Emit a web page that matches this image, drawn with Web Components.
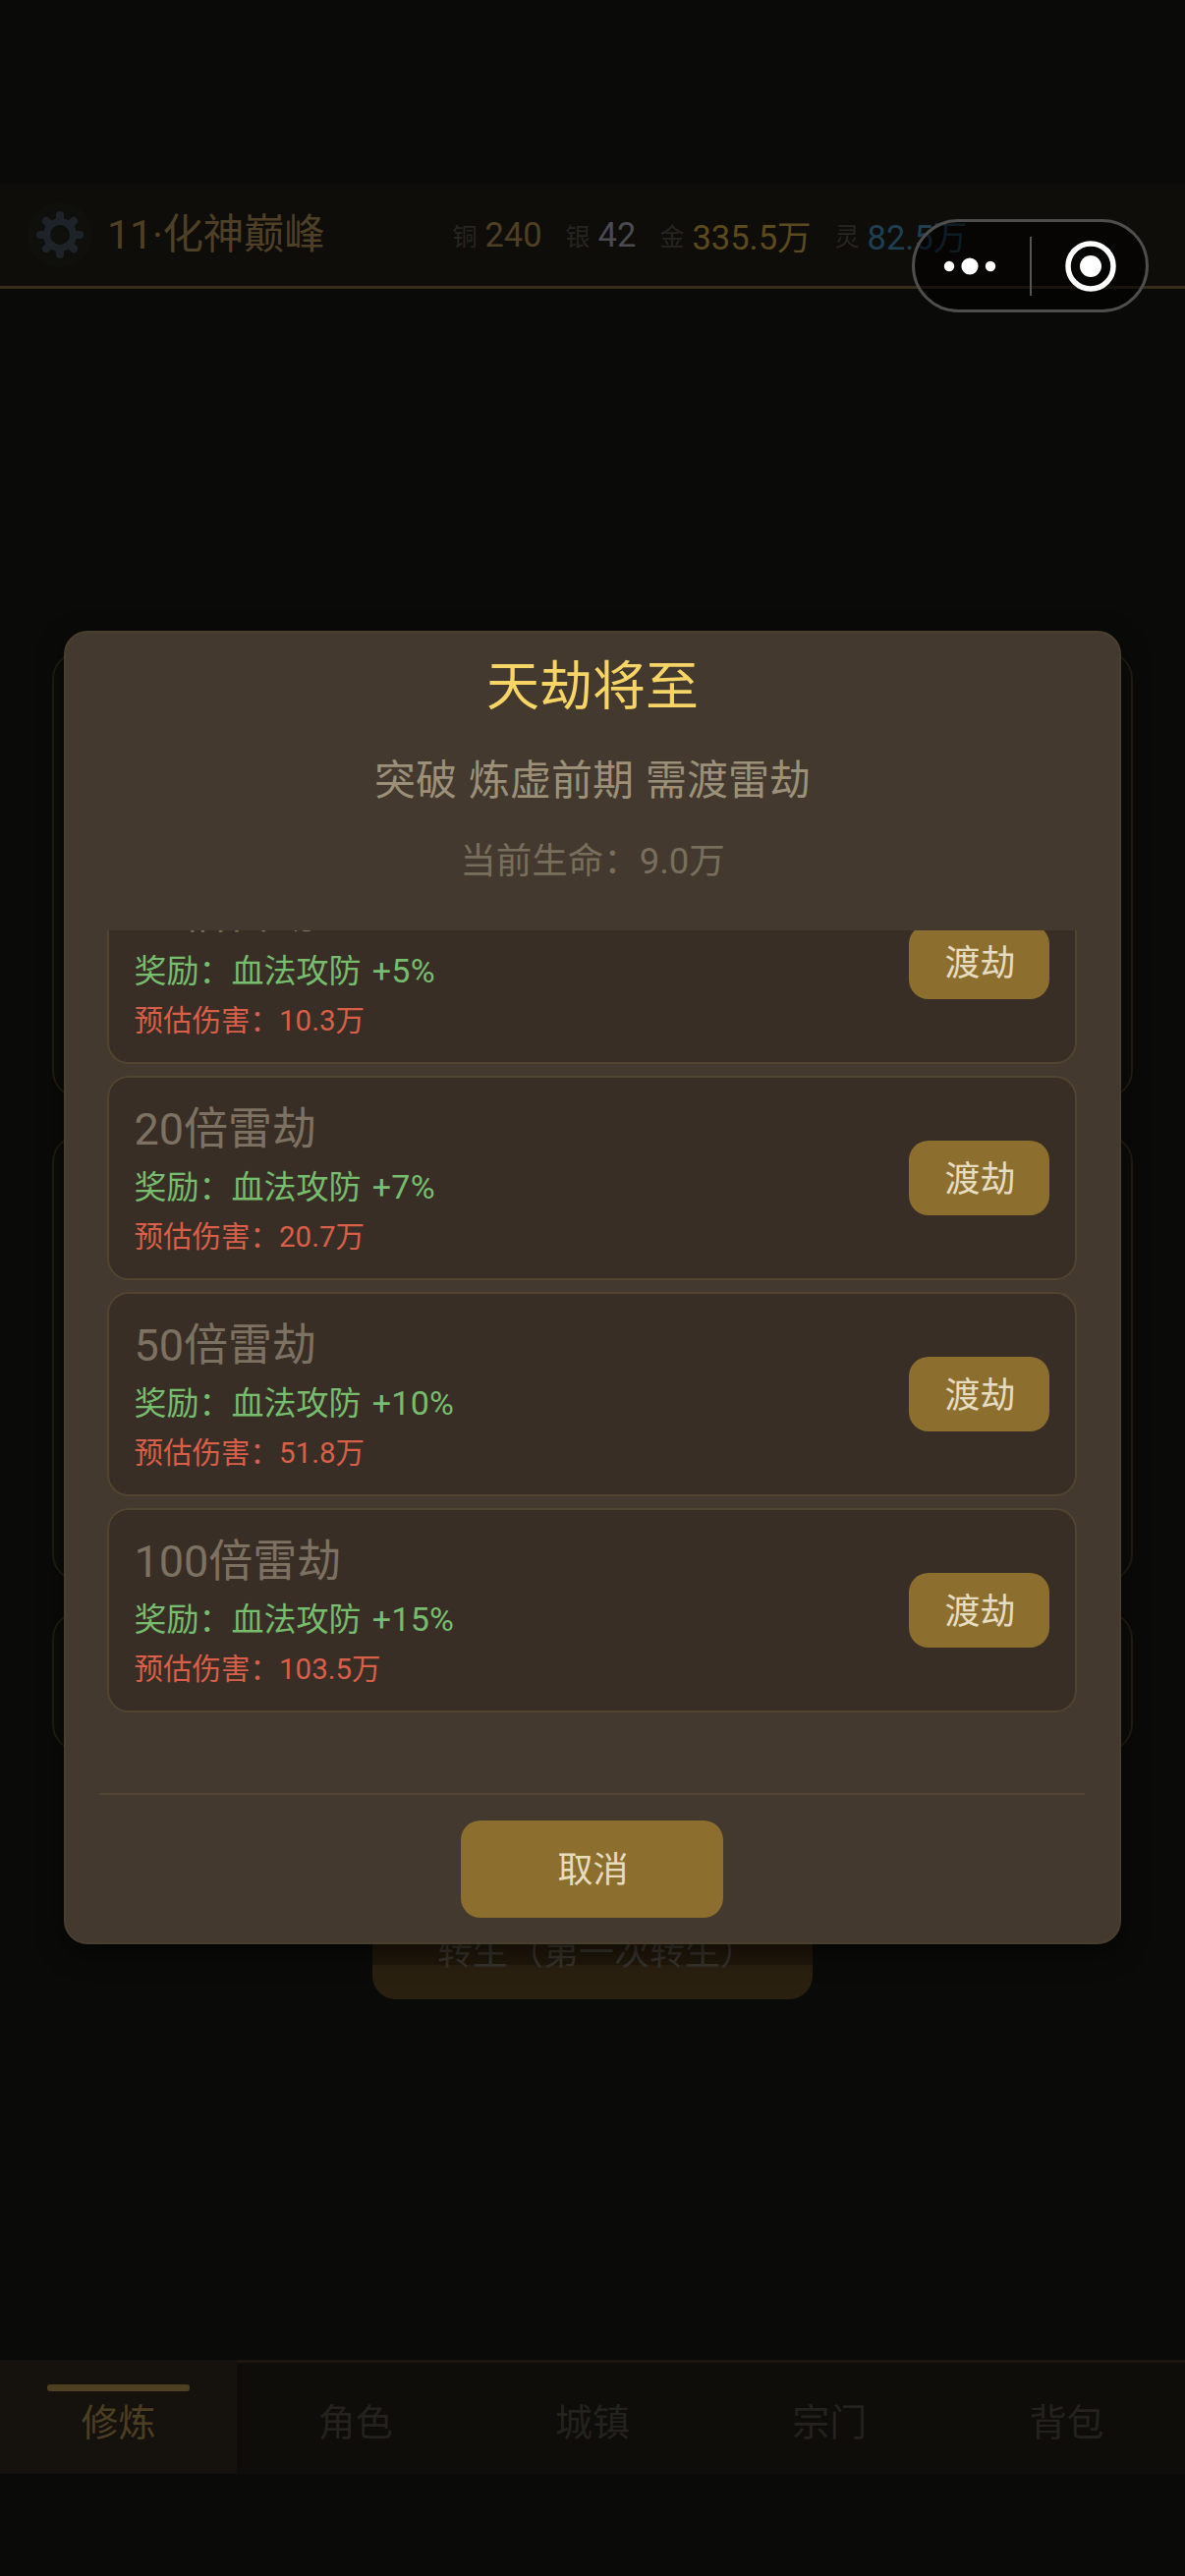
<!DOCTYPE html>
<html lang="zh-CN">
<head>
<meta charset="utf-8">
<title>天劫将至</title>
<style>
html,body{margin:0;padding:0;background:#0a0a08;}
body{font-family:Roboto,"Noto Sans CJK SC",sans-serif;}
</style>
</head>
<body>
<game-app>
  <status-header slot="header" level="11·化神巅峰">
    <coin-chip label="铜" value="240" tone="#4e3f25"></coin-chip>
    <coin-chip label="银" value="42" tone="#4a4a50"></coin-chip>
    <coin-chip label="金" value="335.5万" tone="#5b4a1d"></coin-chip>
    <coin-chip label="灵" value="82.5万" tone="#1f3f52"></coin-chip>
  </status-header>
  <back-panel slot="main" h="455"></back-panel>
  <back-panel slot="main" h="455" gap="37"></back-panel>
  <back-panel slot="main" h="143" gap="30"></back-panel>
  <rebirth-button slot="main">转生（第一次转生）</rebirth-button>
  <tab-bar slot="tabs">
    <tab-item active>修炼</tab-item>
    <tab-item>角色</tab-item>
    <tab-item>城镇</tab-item>
    <tab-item>宗门</tab-item>
    <tab-item>背包</tab-item>
  </tab-bar>
  <mini-capsule slot="over"></mini-capsule>
  <trial-dialog slot="over" heading="天劫将至" sub="突破 炼虚前期 需渡雷劫" hp="当前生命：9.0万">
    <trial-row name="10倍雷劫" reward="奖励：血法攻防" bonus="+5%" damage="预估伤害：10.3万"></trial-row>
    <trial-row name="20倍雷劫" reward="奖励：血法攻防" bonus="+7%" damage="预估伤害：20.7万"></trial-row>
    <trial-row name="50倍雷劫" reward="奖励：血法攻防" bonus="+10%" damage="预估伤害：51.8万"></trial-row>
    <trial-row name="100倍雷劫" reward="奖励：血法攻防" bonus="+15%" damage="预估伤害：103.5万"></trial-row>
  </trial-dialog>
</game-app>
<script>
const def=(name,html,init)=>{
  customElements.define(name,class extends HTMLElement{
    constructor(){super();this.attachShadow({mode:'open'});}
    connectedCallback(){
      const a=n=>this.getAttribute(n)||'';
      this.shadowRoot.innerHTML=typeof html==='function'?html(a,this):html;
      if(init)init(this,a);
    }
  });
};
def('game-app',`<style>
:host{display:flex;flex-direction:column;position:relative;width:1206px;height:2622px;overflow:hidden;background:#0a0a08;color:#888;font-family:Roboto,"Noto Sans CJK SC",sans-serif;}
.top{height:187px;flex:none}
.main{flex:1;display:flex;flex-direction:column;align-items:center;padding:369px 53px 0;box-sizing:border-box;min-height:0}
.foot{height:104px;flex:none}
</style>
<div class="top"></div>
<slot name="header"></slot>
<div class="main"><slot name="main"></slot></div>
<slot name="tabs"></slot>
<div class="foot"></div>
<slot name="over"></slot>`);
def('status-header',a=>`<style>
:host{display:flex;align-items:center;height:107px;box-sizing:border-box;border-bottom:3px solid #352c1a;background:#0e0d09;padding:0 0 0 28px;flex:none}
svg{width:66px;height:66px;flex:none}
.lv{font-size:41.5px;line-height:50px;color:#4e4026;margin-left:15px;white-space:nowrap;letter-spacing:-.3px}
.coins{display:flex;align-items:center;gap:24px;margin-left:130px}
</style>
<svg viewBox="-33 -33 66 66"><circle r="33" fill="#0f0f0c"/>
<g stroke="#1e2329" stroke-width="8" stroke-linecap="round"><path d="M0-15V-20M0 15V20M-15 0H-20M15 0H20M-10.6-10.6L-14.1-14.1M10.6-10.6L14.1-14.1M-10.6 10.6L-14.1 14.1M10.6 10.6L14.1 14.1"/></g>
<circle r="13.5" fill="none" stroke="#1e2329" stroke-width="7"/></svg>
<span class="lv">${a('level')}</span>
<div class="coins"><slot></slot></div>`);
def('coin-chip',a=>`<style>
:host{display:inline-flex;align-items:center;gap:8px;white-space:nowrap}
.l{font-size:25px;color:#272521}
.v{font-size:34.5px;color:${a('tone')}}
</style><span class="l">${a('label')}</span><span class="v">${a('value')}</span>`);
def('back-panel',a=>`<style>
:host{display:block;box-sizing:border-box;width:1100px;height:${a('h')}px;margin-top:${a('gap')||0}px;border:2px solid #221d12;border-radius:28px;background:#0c0c09;flex:none}
</style>`);
def('rebirth-button',`<style>
:host{display:flex;align-items:center;justify-content:center;box-sizing:border-box;width:448px;height:102px;margin-top:150px;padding-left:8px;border-radius:24px;background:linear-gradient(#1f170b 67px,#2a2010 67px);color:#36322c;font-size:36px;flex:none}
</style><slot></slot>`);
def('tab-bar',`<style>
:host{display:grid;grid-template-columns:repeat(5,1fr);height:116px;box-sizing:border-box;border-top:3px solid #1a1610;background:#0e0d0a;flex:none}
</style><slot></slot>`);
def('tab-item',(a,el)=>`<style>
:host{display:flex;align-items:center;justify-content:center;position:relative;font-size:38px;color:#24221e;padding-top:2px;box-sizing:border-box}
:host([active]){background:#15120d;color:#4c3e22;margin-top:-3px;padding-top:5px}
.bar{position:absolute;top:25px;left:48px;right:48px;height:7px;border-radius:3px;background:#4c3f22}
</style>${el.hasAttribute('active')?'<i class="bar"></i>':''}<slot></slot>`);
def('mini-capsule',`<style>
:host{position:absolute;left:928px;top:223px;width:241px;height:95px;box-sizing:border-box;border:3px solid #4e4e4e;border-radius:48px;background:rgba(0,0,0,.55);display:flex;align-items:center}
.side{flex:1;display:flex;align-items:center;justify-content:center;height:100%}
.side.r{padding-left:4px}
.side.l{padding-right:4px}
.sep{width:2px;height:60px;background:#555;flex:none}
</style>
<div class="side l"><svg width="56" height="20" viewBox="0 0 56 20"><circle cx="7" cy="10" r="5.2" fill="#fff"/><circle cx="28" cy="10" r="8.6" fill="#fff"/><circle cx="49" cy="10" r="5.2" fill="#fff"/></svg></div>
<div class="sep"></div>
<div class="side r"><svg width="54" height="54" viewBox="0 0 54 54"><circle cx="27" cy="27" r="23" fill="none" stroke="#fff" stroke-width="5.5"/><circle cx="27" cy="27" r="11" fill="#fff"/></svg></div>`);
def('trial-dialog',a=>`<style>
:host{position:absolute;inset:0;display:flex;align-items:flex-start;justify-content:center;padding-top:642px;box-sizing:border-box}
.box{width:1076px;height:1337px;box-sizing:border-box;border:2px solid #4a3f2e;border-radius:24px;background:#43392e;box-shadow:0 8px 26px rgba(0,0,0,.5);display:flex;flex-direction:column}
.head{display:flex;flex-direction:column;align-items:center;padding:21px 0 45px;flex:none}
.t{font-size:54px;line-height:70px;color:#f6d566}
.s{font-size:42px;line-height:54px;margin-top:33px;color:#9c9079;word-spacing:1.5px}
.h{font-size:36.5px;line-height:52px;margin-top:29px;margin-bottom:-1px;color:#786e5c}
.list{height:878px;overflow:hidden;padding:0 43px 0 41.5px;display:flex;flex-direction:column;gap:12px;flex:none;box-sizing:border-box}
::slotted(trial-row:first-child){margin-top:-72px}
.foot{margin:0 35px 0 34px;border-top:2px solid #524531;padding-top:26px;display:flex;justify-content:center}
.cancel{width:267px;height:99px;box-sizing:border-box;padding:0 0 6px 2px;border-radius:20px;background:#8c6f2e;color:#e6dcc0;font-size:36px;display:flex;align-items:center;justify-content:center}
</style>
<div class="box">
<div class="head"><div class="t">${a('heading')}</div><div class="s">${a('sub')}</div><div class="h">${a('hp')}</div></div>
<div class="list"><slot></slot></div>
<div class="foot"><div class="cancel">取消</div></div>
</div>`);
def('trial-row',a=>`<style>
:host{display:flex;align-items:center;justify-content:space-between;box-sizing:border-box;height:208px;flex:none;border:2px solid #514530;border-radius:22px;background:#382e26;padding:23px 26px 22px 26px}
.n{font-size:45px;line-height:60px;color:#7d7161}
.r{font-size:33px;line-height:44px;margin-top:6px;color:#76bd6e;white-space:nowrap}
.r span{font-size:34px;margin-left:3px;letter-spacing:.3px}
.d{font-size:29.5px;line-height:42px;margin-top:7px;color:#d95f49}
.b{width:143px;height:76px;box-sizing:border-box;padding:0 0 4px 2px;margin-top:-1px;border-radius:20px;background:#8c6f2e;color:#e6dcc0;font-size:36px;display:flex;align-items:center;justify-content:center;flex:none}
</style>
<div><div class="n">${a('name')}</div><div class="r">${a('reward')} <span>${a('bonus')}</span></div><div class="d">${a('damage')}</div></div>
<div class="b">渡劫</div>`);
</script>
</body>
</html>
